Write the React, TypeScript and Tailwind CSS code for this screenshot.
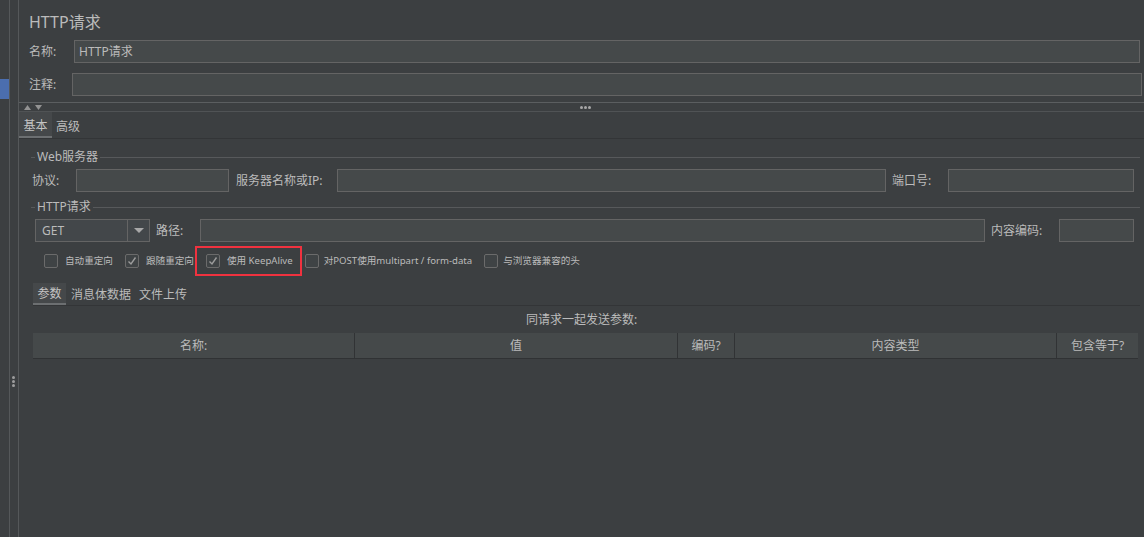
import React from "react";

const field = "h-[23px] border border-[#646464] bg-[#45494a]";

function Check({ checked }: { checked?: boolean }) {
  return (
    <span className="flex h-[14px] w-[14px] shrink-0 items-center justify-center rounded-[2px] border border-[#6b6b6b] bg-[#3f4345]">
      {checked && (
        <svg width="12" height="12" viewBox="0 0 12 12">
          <polyline points="2.5,6.5 5,9 9.5,2.5" fill="none" stroke="#9c9c9c" strokeWidth="1.4" />
        </svg>
      )}
    </span>
  );
}

function Legend({ title }: { title: string }) {
  return (
    <div className="flex h-[16px] items-center">
      <div className="h-px w-[4px] bg-[#57595b]" />
      <span className="px-[2px] leading-[16px]">{title}</span>
      <div className="h-px flex-1 bg-[#57595b]" />
    </div>
  );
}

const columns = [
  { name: "名称:", w: "w-[322px]" },
  { name: "值", w: "w-[323px]" },
  { name: "编码?", w: "w-[57px]" },
  { name: "内容类型", w: "w-[322px]" },
  { name: "包含等于?", w: "flex-1" },
];

export default function App() {
  return (
    <div className="flex h-[537px] w-[1144px] overflow-hidden bg-[#3c3f41] font-['Noto_Sans','Noto_Sans_CJK_SC',sans-serif] text-[12px] text-[#bbbbbb]">
      {/* left gutters */}
      <div className="w-[10px] shrink-0 border-r border-[#55585a] pt-[79px]">
        <div className="h-[20px] w-[9px] bg-[#4b6eaf]" />
      </div>
      <div className="flex w-[9px] shrink-0 flex-col items-center gap-[1px] border-r border-[#55585a] pt-[376px] pr-px">
        <span className="h-[3px] w-[3px] rounded-full bg-[#9d9d9d]" />
        <span className="h-[3px] w-[3px] rounded-full bg-[#9d9d9d]" />
        <span className="h-[3px] w-[3px] rounded-full bg-[#9d9d9d]" />
      </div>

      <main className="flex min-w-0 flex-1 flex-col">
        {/* title */}
        <div className="h-[40px] pl-[10px] pt-[11px] text-[16px] leading-[22px]">HTTP请求</div>

        <div className="flex h-[23px] items-center pl-[10px] pr-[4px]">
          <span className="w-[45px] pt-px">名称:</span>
          <div className={`${field} flex flex-1 items-center px-[4px]`}>HTTP请求</div>
        </div>
        <div className="mt-[10px] flex h-[23px] items-center pl-[10px] pr-[2px]">
          <span className="w-[43px] pt-px">注释:</span>
          <div className={`${field} flex-1`} />
        </div>

        {/* splitter */}
        <div className="mt-[6px] grid h-[10px] grid-cols-[1fr_auto_1fr] items-center border-y border-t-[#5b5e60] border-b-[#505355]">
          <div className="flex items-center gap-[4px] pl-[5px]">
            <svg width="7" height="5" viewBox="0 0 7 5"><polygon points="0,5 7,5 3.5,0" fill="#939393" /></svg>
            <svg width="7" height="5" viewBox="0 0 7 5"><polygon points="0,0 7,0 3.5,5" fill="#939393" /></svg>
          </div>
          <div className="ml-[8px] flex gap-[1px]">
            <span className="h-[3px] w-[3px] rounded-full bg-[#a8a8a8]" />
            <span className="h-[3px] w-[3px] rounded-full bg-[#a8a8a8]" />
            <span className="h-[3px] w-[3px] rounded-full bg-[#a8a8a8]" />
          </div>
          <div />
        </div>

        {/* tabs */}
        <div className="flex h-[27px] items-stretch border-b border-[#333537]">
          <div className="flex w-[33px] items-center justify-center border-b-2 border-[#6c6f71] bg-[#45484a] pt-[3px] text-[#c4c4c4]">基本</div>
          <div className="flex items-center pl-[4px] pt-[3px]">高级</div>
        </div>

        {/* content */}
        <div className="flex flex-col pl-[12px] pr-[4px]">
          <div className="mt-[10px]">
            <Legend title="Web服务器" />
          </div>
          <div className="mt-[4px] flex h-[23px] items-center pl-px">
            <span className="w-[44px]">协议:</span>
            <div className={`${field} w-[153px]`} />
            <span className="ml-[7px] w-[101px]">服务器名称或IP:</span>
            <div className={`${field} flex-1`} />
            <span className="ml-[6px] w-[56px]">端口号:</span>
            <div className={`${field} mr-[6px] w-[186px]`} />
          </div>

          <div className="mt-[7px]">
            <Legend title="HTTP请求" />
          </div>
          <div className="mt-[4px] flex h-[23px] items-center">
            <div className="ml-[4px] flex h-[23px] w-[115px] border border-[#646464] bg-[#43474a]">
              <span className="flex flex-1 items-center pl-[6px]">GET</span>
              <span className="flex w-[22px] items-center justify-center border-l border-[#646464]">
                <svg width="10" height="5" viewBox="0 0 10 5"><polygon points="0,0 10,0 5,5" fill="#a8a8a8" /></svg>
              </span>
            </div>
            <span className="ml-[6px] w-[44px]">路径:</span>
            <div className={`${field} flex-1`} />
            <span className="ml-[6px] w-[68px]">内容编码:</span>
            <div className={`${field} mr-[6px] w-[75px]`} />
          </div>

          {/* options */}
          <div className="mt-[12px] flex h-[14px] items-center gap-[12px] pl-[13px] text-[9.6px] leading-[14px]">
            <div className="flex items-center gap-[7px]">
              <Check />
              <span>自动重定向</span>
            </div>
            <div className="flex items-center gap-[7px]">
              <Check checked />
              <span>跟随重定向</span>
            </div>
            <div className="relative flex items-center gap-[7px]">
              <Check checked />
              <span>使用 KeepAlive</span>
              <span className="pointer-events-none absolute -top-[8px] -right-[9px] -bottom-[8px] -left-[11px] border-2 border-[#f0323f]" />
            </div>
            <div className="flex items-center gap-[5px]">
              <Check />
              <span>对POST使用multipart / form-data</span>
            </div>
            <div className="flex items-center gap-[5px]">
              <Check />
              <span>与浏览器兼容的头</span>
            </div>
          </div>

          {/* sub tabs */}
          <div className="ml-[2px] mt-[15px] flex h-[23px] items-stretch border-b border-[#333537]">
            <div className="flex w-[33px] items-center justify-center border-b-2 border-[#6c6f71] bg-[#45484a] pt-px text-[#c4c4c4]">参数</div>
            <div className="flex items-center pl-[5px] pt-px">消息体数据</div>
            <div className="flex items-center pl-[8px] pt-px">文件上传</div>
          </div>

          <div className="ml-[2px] mr-[2px] flex h-[27px] items-center justify-center pr-[8px]">同请求一起发送参数:</div>

          {/* table header */}
          <div className="ml-[2px] mr-[2px] flex h-[26px] border-b border-[#303234] bg-[#45494a]">
            {columns.map((c, i) => (
              <div
                key={c.name}
                className={`${c.w} flex items-center justify-center ${i < columns.length - 1 ? "border-r border-[#313335]" : ""}`}
              >
                {c.name}
              </div>
            ))}
          </div>
        </div>
      </main>
    </div>
  );
}
